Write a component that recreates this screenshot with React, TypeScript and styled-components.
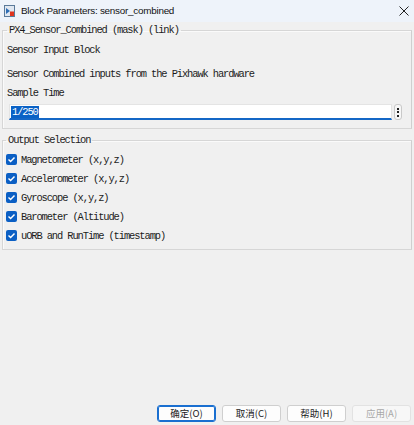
import React from "react";
import styled, { createGlobalStyle } from "styled-components";

const Global = createGlobalStyle`
  html, body { margin: 0; padding: 0; background: #f0f0f0; }
  body { width: 414px; height: 425px; overflow: hidden; }
`;

const mono = `"Liberation Mono", "Noto Sans CJK SC", monospace`;

const Window = styled.div`
  width: 414px;
  height: 425px;
  display: flex;
  flex-direction: column;
  background: #f0f0f0;
  font-family: ${mono};
  font-size: 10.4px;
  letter-spacing: -1.09px;
  color: #1c1c1c;
`;

const TitleBar = styled.div`
  height: 22px;
  flex: none;
  display: flex;
  align-items: center;
  padding-left: 4px;
  gap: 6px;
  background: #eef3fa;
  font-family: "Liberation Sans", Arial, sans-serif;
  font-size: 9.9px;
  letter-spacing: -0.25px;
  color: #111;
`;

const TitleText = styled.span`
  flex: 1;
  line-height: 22px;
`;

const CloseBtn = styled.div`
  width: 20px;
  height: 22px;
  display: flex;
  align-items: center;
  justify-content: center;
`;

const Body = styled.div`
  flex: 1;
  display: flex;
  flex-direction: column;
  padding: 0 2px;
`;

const Group = styled.fieldset<{ $mt: number }>`
  margin: ${(p) => p.$mt}px 0 0 0;
  padding: 0 3px;
  border: 1px solid #d6d6d6;
  border-right-color: #cfcfcf;
  border-radius: 0;
  min-width: 0;
  box-shadow: inset 1px 1px 0 #fafafa;
`;

const Legend = styled.legend<{ $ml: number }>`
  margin-left: ${(p) => p.$ml}px;
  padding: 0 2px;
  line-height: 12px;
  font-family: ${mono};
  font-size: 10.4px;
  letter-spacing: -1.09px;
  color: #1c1c1c;
`;

const Para = styled.div<{ $mt: number }>`
  margin-top: ${(p) => p.$mt}px;
  margin-left: 1px;
  line-height: 12px;
  white-space: nowrap;
`;

const InputRow = styled.div`
  display: flex;
  align-items: center;
  gap: 2px;
  margin: 5px 6px 8px 3px;
  height: 16px;
`;

const TextInput = styled.div`
  flex: 1;
  height: 16px;
  box-sizing: border-box;
  background: #fff;
  border: 1px solid #e4e4e4;
  border-bottom: 2px solid #1467c6;
  display: flex;
  align-items: center;
  padding-left: 1px;
`;

const Selected = styled.span`
  background: #0a62c6;
  color: #fff;
  line-height: 12px;
  padding: 0 1px;
`;

const Kebab = styled.div`
  width: 8px;
  height: 16px;
  box-sizing: border-box;
  border: 1px solid #c9c9c9;
  border-radius: 3px;
  background: #f7f7f7;
  display: flex;
  flex-direction: column;
  align-items: center;
  justify-content: center;
  gap: 1.5px;
`;

const Dot = styled.span`
  width: 2px;
  height: 2px;
  background: #222;
`;

const CheckList = styled.div`
  display: flex;
  flex-direction: column;
  padding: 4px 0 4px 0;
`;

const CheckRow = styled.label`
  display: flex;
  align-items: center;
  height: 19px;
  gap: 4px;
  white-space: nowrap;
`;

const Box = styled.span`
  width: 11px;
  height: 11px;
  border-radius: 2px;
  background: #0b5fc4;
  display: flex;
  align-items: center;
  justify-content: center;
  flex: none;
`;

const Spacer = styled.div`
  flex: 1;
`;

const ButtonRow = styled.div`
  display: flex;
  justify-content: flex-end;
  gap: 6px;
  padding: 0 3px 3px 0;
`;

const Button = styled.button<{ $primary?: boolean }>`
  width: 59px;
  height: 17px;
  box-sizing: border-box;
  padding: 0;
  border-radius: 3px;
  border: 1px solid ${(p) => (p.$primary ? "#1a6fd0" : "#cfcfcf")};
  box-shadow: ${(p) => (p.$primary ? "inset 0 0 0 1px #1a6fd0" : "none")};
  background: #fdfdfd;
  font-family: "Noto Sans CJK SC", "Liberation Serif", serif;
  font-size: 9.5px;
  line-height: 15px;
  color: #1a1a1a;
  &:disabled {
    color: #a8a8a8;
    border-color: #e2e2e2;
    background: #f7f7f7;
  }
`;

const Check = () => (
  <svg width="9" height="9" viewBox="0 0 9 9">
    <path d="M1.5 4.6 L3.6 6.6 L7.5 2.4" fill="none" stroke="#fff" strokeWidth="1.4" />
  </svg>
);

const BlockIcon = () => (
  <svg width="11" height="12" viewBox="0 0 11 12">
    <rect x="0.5" y="0.5" width="10" height="11" fill="#dfe7f1" stroke="#5a7a9a" />
    <path d="M2 3 L6 6 L2 9 Z" fill="#2c6db5" />
    <rect x="6" y="6.5" width="4" height="4.5" fill="#e0341e" />
  </svg>
);

const labels = [
  "Magnetometer (x,y,z)",
  "Accelerometer (x,y,z)",
  "Gyroscope (x,y,z)",
  "Barometer (Altitude)",
  "uORB and RunTime (timestamp)",
];

export default function App() {
  return (
    <>
      <Global />
      <Window>
        <TitleBar>
          <BlockIcon />
          <TitleText>Block Parameters: sensor_combined</TitleText>
          <CloseBtn>
            <svg width="10" height="10" viewBox="0 0 10 10">
              <path d="M0.5 0.5 L9.5 9.5 M9.5 0.5 L0.5 9.5" stroke="#222" strokeWidth="1" />
            </svg>
          </CloseBtn>
        </TitleBar>
        <Body>
          <Group $mt={2}>
            <Legend $ml={1}>PX4_Sensor_Combined (mask) (link)</Legend>
            <Para $mt={8}>Sensor Input Block</Para>
            <Para $mt={12}>Sensor Combined inputs from the Pixhawk hardware</Para>
            <Para $mt={7}>Sample Time</Para>
            <InputRow>
              <TextInput>
                <Selected>1/250</Selected>
              </TextInput>
              <Kebab>
                <Dot />
                <Dot />
                <Dot />
              </Kebab>
            </InputRow>
          </Group>
          <Group $mt={5}>
            <Legend $ml={0}>Output Selection</Legend>
            <CheckList>
              {labels.map((l) => (
                <CheckRow key={l}>
                  <Box>
                    <Check />
                  </Box>
                  {l}
                </CheckRow>
              ))}
            </CheckList>
          </Group>
          <Spacer />
        </Body>
        <ButtonRow>
          <Button $primary>确定(O)</Button>
          <Button>取消(C)</Button>
          <Button>帮助(H)</Button>
          <Button disabled>应用(A)</Button>
        </ButtonRow>
      </Window>
    </>
  );
}
